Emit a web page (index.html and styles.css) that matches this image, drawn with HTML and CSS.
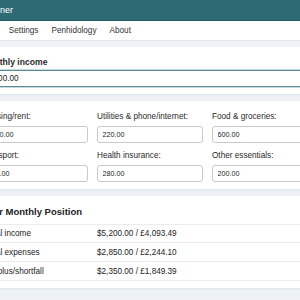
FILE: index.html
```html
<!DOCTYPE html>
<html lang="en">
<head>
    <meta charset="UTF-8">
    <meta name="viewport" content="width=device-width, initial-scale=1.0">
    <title>Planner</title>
    <link rel="stylesheet" href="styles.css">
</head>
<body>
    <header class="topbar">
        <div class="wrap">
            <div class="inner">
                <span class="brand">Planner</span>
            </div>
        </div>
    </header>
    <nav class="menu">
        <div class="wrap">
            <div class="inner links">
                <a href="#">Home</a>
                <a href="#">Settings</a>
                <a href="#">Penhidology</a>
                <a href="#">About</a>
            </div>
        </div>
    </nav>
    <div class="wrap main">
        <div class="inner stack">
            <section class="card">
                <label class="lead" for="income">Monthly income</label>
                <input class="field focus" id="income" type="text" value="5200.00">
            </section>

            <section class="card costs">
                <div class="grid">
                    <div class="cell">
                        <label>Housing/rent:</label>
                        <input class="field" type="text" value="1400.00">
                    </div>
                    <div class="cell">
                        <label>Utilities &amp; phone/internet:</label>
                        <input class="field" type="text" value="220.00">
                    </div>
                    <div class="cell">
                        <label>Food &amp; groceries:</label>
                        <input class="field" type="text" value="600.00">
                    </div>
                    <div class="cell">
                        <label>Transport:</label>
                        <input class="field" type="text" value="150.00">
                    </div>
                    <div class="cell">
                        <label>Health insurance:</label>
                        <input class="field" type="text" value="280.00">
                    </div>
                    <div class="cell">
                        <label>Other essentials:</label>
                        <input class="field" type="text" value="200.00">
                    </div>
                </div>
            </section>

            <section class="card summary">
                <h2>Your Monthly Position</h2>
                <div class="rows">
                    <div class="row"><span>Total income</span><span>$5,200.00 / £4,093.49</span></div>
                    <div class="row"><span>Total expenses</span><span>$2,850.00 / £2,244.10</span></div>
                    <div class="row"><span>Surplus/shortfall</span><span>$2,350.00 / £1,849.39</span></div>
                </div>
            </section>
        </div>
    </div>
</body>
</html>
```

FILE: styles.css
```css
*{
    margin: 0;
    padding: 0;
    box-sizing: border-box;
}
body{
    background-color: #eef2f6;
    font-family: "Liberation Sans", Arial, sans-serif;
    font-size: 8.2px;
    color: #222;
}
.wrap{
    display: flex;
    justify-content: center;
}
.inner{
    flex: 0 0 352px;
}
.topbar{
    background-color: #2c6b74;
    border-bottom: 1px solid #245c64;
}
.topbar .inner{
    height: 20px;
    padding: 0 8px;
    display: flex;
    align-items: center;
}
.brand{
    color: #fff;
    font-size: 9px;
}
.menu{
    background-color: #fff;
    border-bottom: 1px solid #e2e7ed;
}
.links{
    height: 19px;
    display: flex;
    align-items: center;
    gap: 13px;
}
.links a{
    color: #333;
    text-decoration: none;
}
.main{
    padding: 6px 0;
}
.stack{
    display: flex;
    flex-direction: column;
    gap: 7px;
}
.card{
    background-color: #fff;
    border-radius: 3px;
    padding: 9px 8px 7px;
    box-shadow: 0 1px 2px rgba(30, 50, 80, .08);
}
.costs{
    padding-top: 10px;
}
.summary{
    padding-top: 8px;
}
label{
    display: block;
    line-height: 12px;
    margin-bottom: 3px;
    color: #2a2a2a;
}
.lead{
    font-weight: bold;
    font-size: 8.6px;
    margin-bottom: 2px;
}
.field{
    display: block;
    width: 100%;
    height: 17px;
    border: 1px solid #c9c9c9;
    border-radius: 3px;
    padding: 0 4.5px;
    font-family: "Liberation Sans", Arial, sans-serif;
    font-size: 7.2px;
    color: #222;
    background-color: #fff;
    outline: none;
}
.focus{
    border-color: #588f97;
    border-radius: 2px;
    padding: 0 6px;
    font-size: 8.2px;
    box-shadow: 0 0 0 1px rgba(88, 143, 151, .35);
}
.grid{
    display: grid;
    grid-template-columns: repeat(3, 106px);
    column-gap: 9px;
    row-gap: 7px;
}
h2{
    font-size: 9.5px;
    line-height: 16px;
    margin-bottom: 4px;
}
.row{
    display: grid;
    grid-template-columns: 112px 1fr;
    height: 19px;
    padding-left: 3px;
    align-items: center;
    border-bottom: 1px solid #ececec;
}
.row:first-child{
    border-top: 1px solid #ececec;
}
```
